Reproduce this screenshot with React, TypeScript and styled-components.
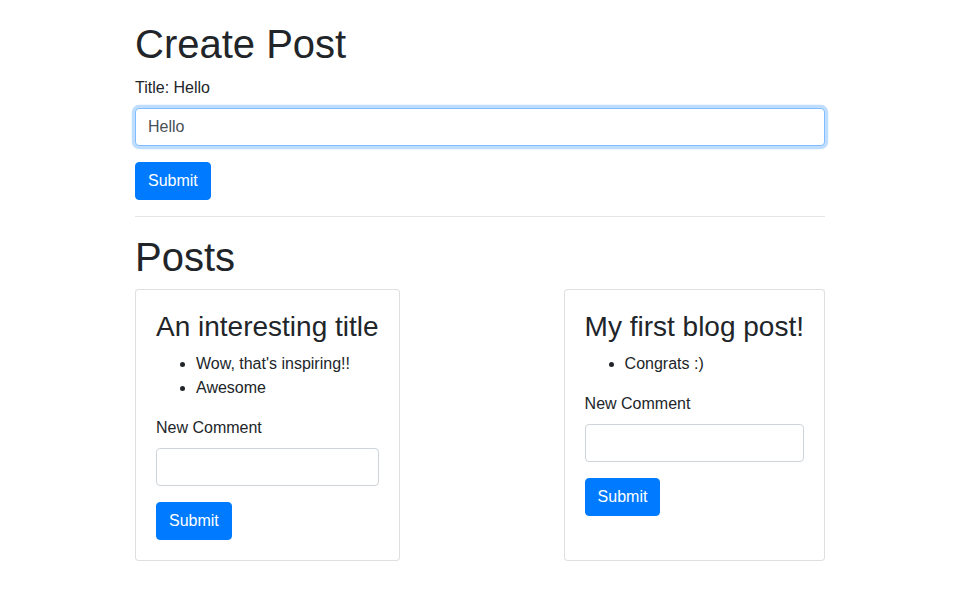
import React, { useEffect, useRef } from "react";
import styled, { createGlobalStyle, css } from "styled-components";

const GlobalStyle = createGlobalStyle`
  *, *::before, *::after { box-sizing: border-box; }
  html, body { margin: 0; padding: 0; background: #fff; }
  body {
    font-family: "Liberation Sans", Arial, sans-serif;
    font-size: 16px;
    line-height: 1.5;
    color: #212529;
  }
`;

const Container = styled.div`
  width: 100%;
  max-width: 720px;
  margin: 0 auto;
  padding: 20px 14px 0 16px;
`;

const PageTitle = styled.h1`
  margin: 0 0 8px;
  font-size: 40px;
  font-weight: 500;
  line-height: 1.2;
`;

const FormGroup = styled.div`
  margin-bottom: 16px;
`;

const Label = styled.label`
  display: inline-block;
  margin-bottom: 8px;
`;

const Input = styled.input<{ $focused?: boolean }>`
  display: block;
  width: 100%;
  height: 38px;
  padding: 6px 12px;
  font-family: inherit;
  font-size: 16px;
  line-height: 1.5;
  color: #495057;
  background: #fff;
  border: 1px solid #ced4da;
  border-radius: 4px;
  outline: none;
  ${(p) =>
    p.$focused &&
    css`
      border-color: #80bdff;
      box-shadow: 0 0 0 3.2px rgba(0, 123, 255, 0.25);
    `}
`;

const Button = styled.button`
  display: inline-block;
  padding: 6px 12px;
  font-family: inherit;
  font-size: 16px;
  line-height: 1.5;
  color: #fff;
  background: #007bff;
  border: 1px solid #007bff;
  border-radius: 4px;
  cursor: pointer;
`;

const Divider = styled.hr`
  margin: 16px 0;
  border: 0;
  border-top: 1px solid rgba(0, 0, 0, 0.1);
`;

const CardRow = styled.div`
  display: flex;
  flex-direction: row;
  flex-wrap: wrap;
  justify-content: space-between;
`;

const Card = styled.div`
  display: flex;
  flex-direction: column;
  background: #fff;
  border: 1px solid rgba(0, 0, 0, 0.125);
  border-radius: 4px;
`;

const CardBody = styled.div`
  flex: 1 1 auto;
  padding: 20px;
`;

const CardTitle = styled.h3`
  margin: 0 0 8px;
  font-size: 28px;
  font-weight: 500;
  line-height: 1.2;
`;

const CommentList = styled.ul`
  margin: 0 0 16px;
  padding-left: 40px;
`;

type Post = { id: string; title: string; comments: string[] };

const posts: Post[] = [
  { id: "a", title: "An interesting title", comments: ["Wow, that's inspiring!!", "Awesome"] },
  { id: "b", title: "My first blog post!", comments: ["Congrats :)"] },
];

function PostCard({ post }: { post: Post }) {
  return (
    <Card>
      <CardBody>
        <CardTitle>{post.title}</CardTitle>
        <CommentList>
          {post.comments.map((c) => (
            <li key={c}>{c}</li>
          ))}
        </CommentList>
        <form onSubmit={(e) => e.preventDefault()}>
          <FormGroup>
            <Label>New Comment</Label>
            <Input type="text" size={1} />
          </FormGroup>
          <Button type="submit">Submit</Button>
        </form>
      </CardBody>
    </Card>
  );
}

export default function App() {
  const ref = useRef<HTMLInputElement>(null);
  useEffect(() => {
    const el = ref.current;
    if (el) {
      el.focus();
      el.setSelectionRange(5, 5);
    }
  }, []);
  return (
    <>
      <GlobalStyle />
      <Container>
        <PageTitle>Create Post</PageTitle>
        <form onSubmit={(e) => e.preventDefault()}>
          <FormGroup>
            <Label>Title: Hello</Label>
            <Input ref={ref} type="text" defaultValue="Hello" $focused />
          </FormGroup>
          <Button type="submit">Submit</Button>
        </form>
        <Divider />
        <PageTitle>Posts</PageTitle>
        <CardRow>
          {posts.map((p) => (
            <PostCard key={p.id} post={p} />
          ))}
        </CardRow>
      </Container>
    </>
  );
}
